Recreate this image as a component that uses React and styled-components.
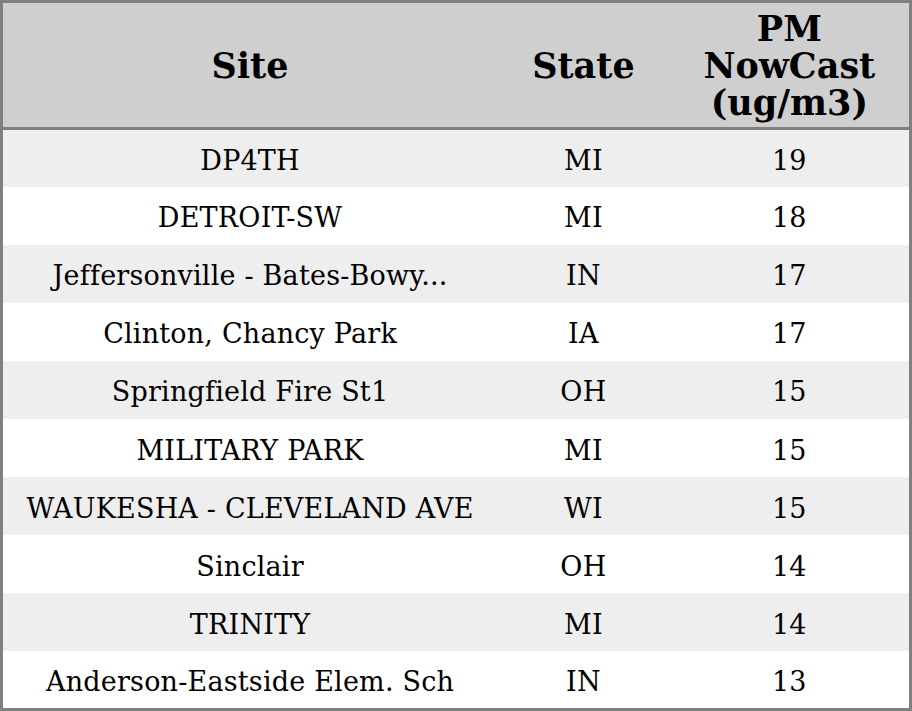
import React from 'react'
import styled, { createGlobalStyle } from 'styled-components'

const GlobalStyle = createGlobalStyle`
  html, body {
    margin: 0;
    padding: 0;
    background: #ffffff;
  }
`

const rows = [
  { site: 'DP4TH', state: 'MI', pm: 19 },
  { site: 'DETROIT-SW', state: 'MI', pm: 18 },
  { site: 'Jeffersonville - Bates-Bowy...', state: 'IN', pm: 17 },
  { site: 'Clinton, Chancy Park', state: 'IA', pm: 17 },
  { site: 'Springfield Fire St1', state: 'OH', pm: 15 },
  { site: 'MILITARY PARK', state: 'MI', pm: 15 },
  { site: 'WAUKESHA - CLEVELAND AVE', state: 'WI', pm: 15 },
  { site: 'Sinclair', state: 'OH', pm: 14 },
  { site: 'TRINITY', state: 'MI', pm: 14 },
  { site: 'Anderson-Eastside Elem. Sch', state: 'IN', pm: 13 }
]

const Table = styled.table`
  width: 912px;
  height: 711px;
  border-collapse: collapse;
  border: 3px solid #808080;
  table-layout: fixed;
  font-family: 'DejaVu Serif', serif;
  color: #000;
`

const Col = styled.col`
  width: ${p => p.$width}px;
`

const HeadCell = styled.th`
  height: 124px;
  padding: 0;
  background: #cfcfcf;
  border-bottom: 3px solid #808080;
  font-size: 35px;
  font-weight: bold;
  line-height: 37px;
  text-align: center;
  vertical-align: middle;
`

const Row = styled.tr`
  height: 57.8px;
  background: ${p => (p.$odd ? '#eeeeee' : '#ffffff')};
`

const Cell = styled.td`
  padding: 4px 0 0;
  font-size: 27px;
  letter-spacing: 0.2px;
  text-align: center;
  vertical-align: middle;
  white-space: nowrap;
`

export default function App() {
  return (
    <>
      <GlobalStyle />
      <Table>
        <colgroup>
          <Col $width={494} />
          <Col $width={172} />
          <Col $width={240} />
        </colgroup>
        <thead>
          <tr>
            <HeadCell>Site</HeadCell>
            <HeadCell>State</HeadCell>
            <HeadCell>
              PM
              <br />
              NowCast
              <br />
              (ug/m3)
            </HeadCell>
          </tr>
        </thead>
        <tbody>
          {rows.map((r, i) => (
            <Row key={r.site} $odd={i % 2 === 0}>
              <Cell>{r.site}</Cell>
              <Cell>{r.state}</Cell>
              <Cell>{r.pm}</Cell>
            </Row>
          ))}
        </tbody>
      </Table>
    </>
  )
}
